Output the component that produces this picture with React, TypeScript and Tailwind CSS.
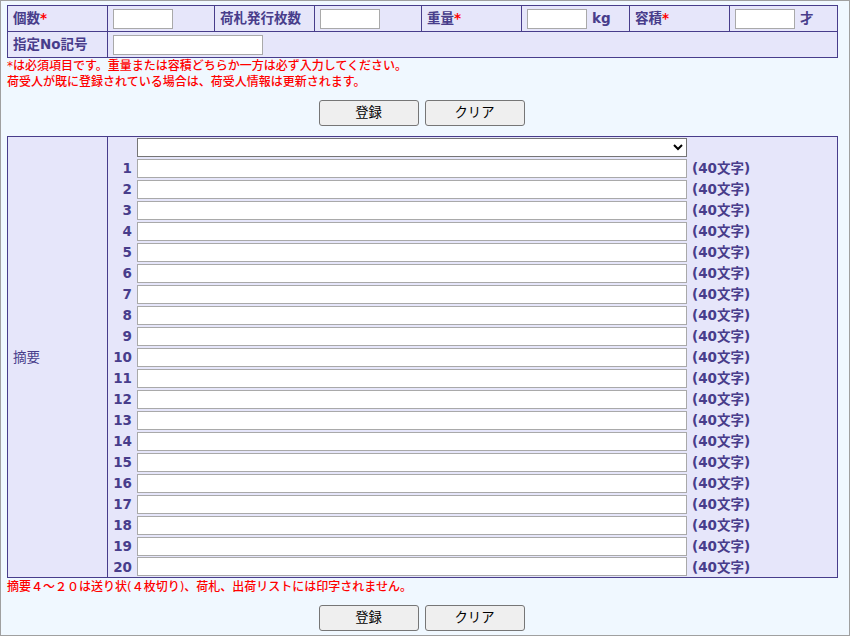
import React from "react";

const font = "font-['DejaVu_Sans','Noto_Sans_CJK_JP',sans-serif]";

function Req() {
  return <span className="text-[#ff0000]">*</span>;
}

function Box({ w }: { w: string }) {
  return (
    <input
      type="text"
      className={`${w} h-[20px] border border-[#a9a9a9] bg-white px-[2px] outline-none`}
    />
  );
}

function Buttons() {
  return (
    <div className="flex justify-center gap-[6px] w-[829px]">
      <button className="w-[100px] h-[26px] border border-[#767676] rounded-[3px] bg-[#efefef] text-[13.33px] text-black">
        登録
      </button>
      <button className="w-[100px] h-[26px] border border-[#767676] rounded-[3px] bg-[#efefef] text-[13.33px] text-black">
        クリア
      </button>
    </div>
  );
}

export default function App() {
  const cell =
    "h-[26px] border-r border-b border-[#483d8b] flex items-center px-[5px]";
  const rows = Array.from({ length: 20 }, (_, i) => i + 1);

  return (
    <div
      className={`w-[850px] h-[636px] border border-[#a0a0a0] bg-[#f0f8ff] pl-[6px] pt-[4px] text-[#483d8b] ${font}`}
    >
      {/* 基本情報 */}
      <div className="grid grid-cols-[100px_107px_100px_107px_100px_108px_100px_108px] w-[831px] border-l border-t border-[#483d8b] bg-[#e6e6fa] text-[13.5px] font-bold">
        <div className={cell}>
          個数
          <Req />
        </div>
        <div className={cell}>
          <Box w="w-[60px]" />
        </div>
        <div className={cell}>荷札発行枚数</div>
        <div className={cell}>
          <Box w="w-[60px]" />
        </div>
        <div className={cell}>
          重量
          <Req />
        </div>
        <div className={`${cell} gap-[5px]`}>
          <Box w="w-[60px]" />
          <span>kg</span>
        </div>
        <div className={cell}>
          容積
          <Req />
        </div>
        <div className={`${cell} gap-[5px]`}>
          <Box w="w-[60px]" />
          <span>才</span>
        </div>

        <div className={cell}>指定No記号</div>
        <div className={`${cell} col-span-7`}>
          <Box w="w-[150px]" />
        </div>
      </div>

      <div className="text-[12px] leading-[16px] text-[#ff0000] font-medium">
        <p>*は必須項目です。重量または容積どちらか一方は必ず入力してください。</p>
        <p>荷受人が既に登録されている場合は、荷受人情報は更新されます。</p>
      </div>

      <div className="mt-[10px]">
        <Buttons />
      </div>

      {/* 摘要 */}
      <div className="mt-[10px] flex w-[831px] border border-[#483d8b] bg-[#e6e6fa] text-[13.5px]">
        <div className="w-[100px] border-r border-[#483d8b] flex items-center px-[5px]">
          摘要
        </div>
        <div className="flex flex-col">
          <div className="h-[21px] flex items-center pl-[29px]">
            <select className="w-[550px] h-[19px] border border-[#767676] bg-white text-[13px] text-black">
              <option value=""></option>
            </select>
          </div>
          {rows.map((n) => (
            <div
              key={n}
              className={`${n === 20 ? "h-[20px] items-start" : "h-[21px] items-center"} flex font-bold`}
            >
              <span className="w-[29px] pr-[5px] text-right">{n}</span>
              <input
                type="text"
                className="w-[550px] h-[19px] border border-[#a9a9a9] bg-white px-[2px] outline-none"
              />
              <span className="pl-[5px]">(40文字)</span>
            </div>
          ))}
        </div>
      </div>

      <p className="pt-[1px] text-[12px] leading-[16px] text-[#ff0000] font-medium">
        摘要４～２０は送り状(４枚切り)、荷札、出荷リストには印字されません。
      </p>

      <div className="mt-[10px]">
        <Buttons />
      </div>
    </div>
  );
}
